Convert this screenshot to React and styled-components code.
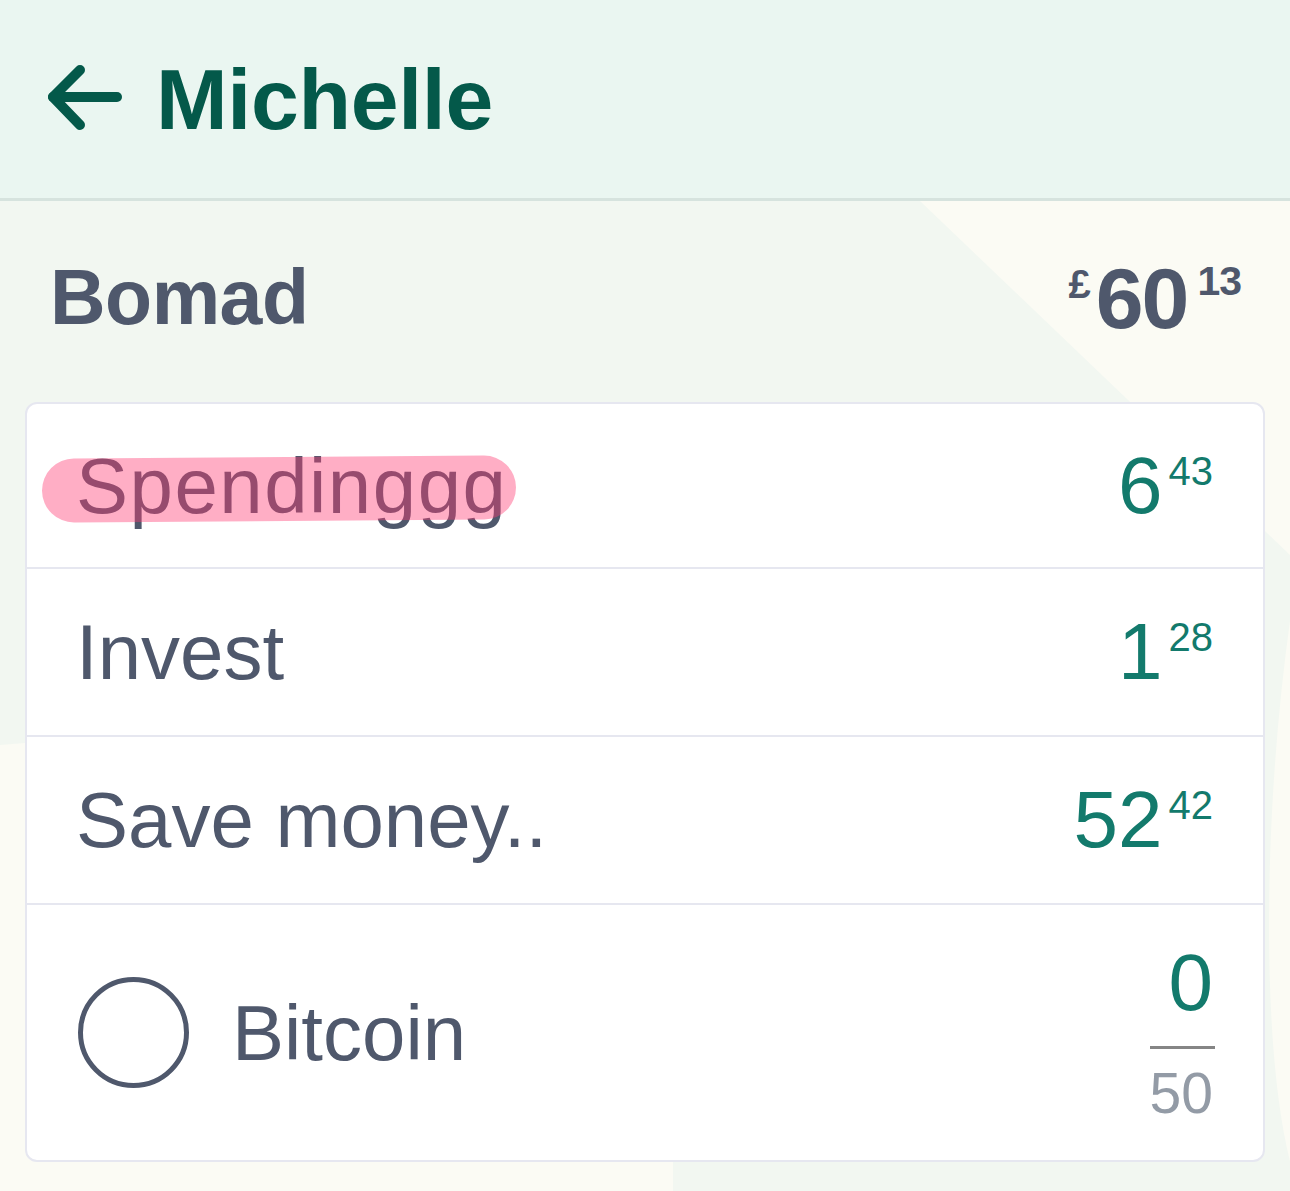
import styled, { createGlobalStyle } from "styled-components";

const GlobalStyle = createGlobalStyle`
  body {
    margin: 0;
    font-family: "Liberation Sans", Arial, sans-serif;
    background: #f2f7f1;
  }
`;

const Page = styled.div`
  width: 1290px;
  min-height: 100vh;
  background: #f2f7f1;
`;

const Header = styled.header`
  height: 198px;
  background: #eaf6f1;
  border-bottom: 3px solid #d6e3de;
  display: flex;
  align-items: center;
  padding-left: 43px;
  gap: 29px;
  color: #04594a;

  svg {
    width: 84px;
    height: 70px;
  }
`;

const Title = styled.h1`
  margin: 0;
  font-size: 86px;
  font-weight: 700;
  line-height: 1;
  letter-spacing: -0.3px;
`;

const Main = styled.main`
  position: relative;
  height: 990px;
  padding: 0 25px;
  box-sizing: border-box;
`;

const Backdrop = styled.svg`
  position: absolute;
  top: 0;
  left: 0;
  z-index: 0;
`;

const Summary = styled.div`
  position: relative;
  z-index: 1;
  height: 201px;
  padding: 0 24px 8px 25px;
  box-sizing: border-box;
  display: flex;
  align-items: center;
  justify-content: space-between;
  color: #4f586c;
`;

const PotName = styled.h2`
  margin: 0;
  font-size: 77px;
  font-weight: 700;
  line-height: 1;
  letter-spacing: -0.5px;
`;

const Total = styled.div`
  display: flex;
  align-items: flex-start;
  font-weight: 700;
  line-height: 1;
`;

const Currency = styled.span`
  font-size: 40px;
  margin-top: 9px;
  margin-right: 5px;
`;

const TotalWhole = styled.span`
  font-size: 86px;
  letter-spacing: -2px;
`;

const TotalCents = styled.span`
  font-size: 41px;
  margin-top: 6px;
  margin-left: 10px;
  letter-spacing: -1px;
`;

const Card = styled.section`
  position: relative;
  z-index: 1;
  background: #fff;
  border: 2px solid #e6e7f0;
  border-radius: 12px;
  overflow: hidden;
`;

const Row = styled.div`
  display: flex;
  align-items: center;
  justify-content: space-between;
  height: ${(p) => (p.tall ? "255px" : "166px")};
  padding: 0 50px 0 49px;
  border-bottom: 2px solid #e6e7f0;
  color: #4f586c;

  &:first-child {
    height: 163px;
  }

  &:last-child {
    border-bottom: none;
  }
`;

const LabelGroup = styled.div`
  display: flex;
  align-items: center;
  gap: 43px;
`;

const Label = styled.span`
  position: relative;
  font-size: 78px;
  line-height: 1;
  letter-spacing: ${(p) => (p.marked ? "1.5px" : "0")};
`;

const Highlight = styled.span`
  position: absolute;
  left: -34px;
  top: 10px;
  width: 474px;
  height: 64px;
  border-radius: 32px;
  background: rgba(255, 58, 115, 0.41);
  transform: rotate(-0.4deg);
`;

const Ring = styled.span`
  width: 111px;
  height: 111px;
  box-sizing: border-box;
  border: 5px solid #4f586c;
  border-radius: 50%;
  margin-left: 2px;
`;

const Money = styled.div`
  display: flex;
  align-items: flex-start;
  color: #137a6c;
  line-height: 1;
`;

const Whole = styled.span`
  font-size: 80px;
`;

const Cents = styled.span`
  font-size: 40px;
  margin-top: 5px;
  margin-left: 6px;
`;

const Fraction = styled.div`
  display: flex;
  flex-direction: column;
  align-items: flex-end;
  line-height: 1;
`;

const Numerator = styled.span`
  font-size: 80px;
  color: #137a6c;
`;

const Bar = styled.span`
  width: 65px;
  height: 3px;
  background: #858585;
  margin: 23px -2px 16px 0;
`;

const Denominator = styled.span`
  font-size: 57px;
  color: #939ba6;
`;

const BackArrow = () => (
  <svg viewBox="0 0 84 70" fill="none" stroke="currentColor" strokeWidth="10" strokeLinecap="round" strokeLinejoin="round">
    <path d="M10 33 H74" />
    <path d="M37 6 L10 33 L37 61" />
  </svg>
);

const Amount = ({ whole, cents }) => (
  <Money>
    <Whole>{whole}</Whole>
    <Cents>{cents}</Cents>
  </Money>
);

const pots = [
  { name: "Spendinggg", whole: "6", cents: "43", marked: true },
  { name: "Invest", whole: "1", cents: "28" },
  { name: "Save money..", whole: "52", cents: "42" },
];

const App = () => {
  return (
    <Page>
      <GlobalStyle />
      <Header>
        <BackArrow />
        <Title>Michelle</Title>
      </Header>

      <Main>
        <Backdrop width="1290" height="990" viewBox="0 0 1290 990">
          <polygon points="920,0 1290,0 1290,354" fill="#fbfbf4" />
          <path d="M1290 420 C1262 620 1262 850 1290 960 Z" fill="#fbfbf4" />
          <polygon points="0,544 673,490 673,990 0,990" fill="#fbfbf4" />
        </Backdrop>

        <Summary>
          <PotName>Bomad</PotName>
          <Total>
            <Currency>£</Currency>
            <TotalWhole>60</TotalWhole>
            <TotalCents>13</TotalCents>
          </Total>
        </Summary>

        <Card>
          {pots.map((pot) => (
            <Row key={pot.name}>
              <Label marked={pot.marked}>
                {pot.name}
                {pot.marked && <Highlight />}
              </Label>
              <Amount whole={pot.whole} cents={pot.cents} />
            </Row>
          ))}
          <Row tall>
            <LabelGroup>
              <Ring />
              <Label>Bitcoin</Label>
            </LabelGroup>
            <Fraction>
              <Numerator>0</Numerator>
              <Bar />
              <Denominator>50</Denominator>
            </Fraction>
          </Row>
        </Card>
      </Main>
    </Page>
  );
};

export default App;
